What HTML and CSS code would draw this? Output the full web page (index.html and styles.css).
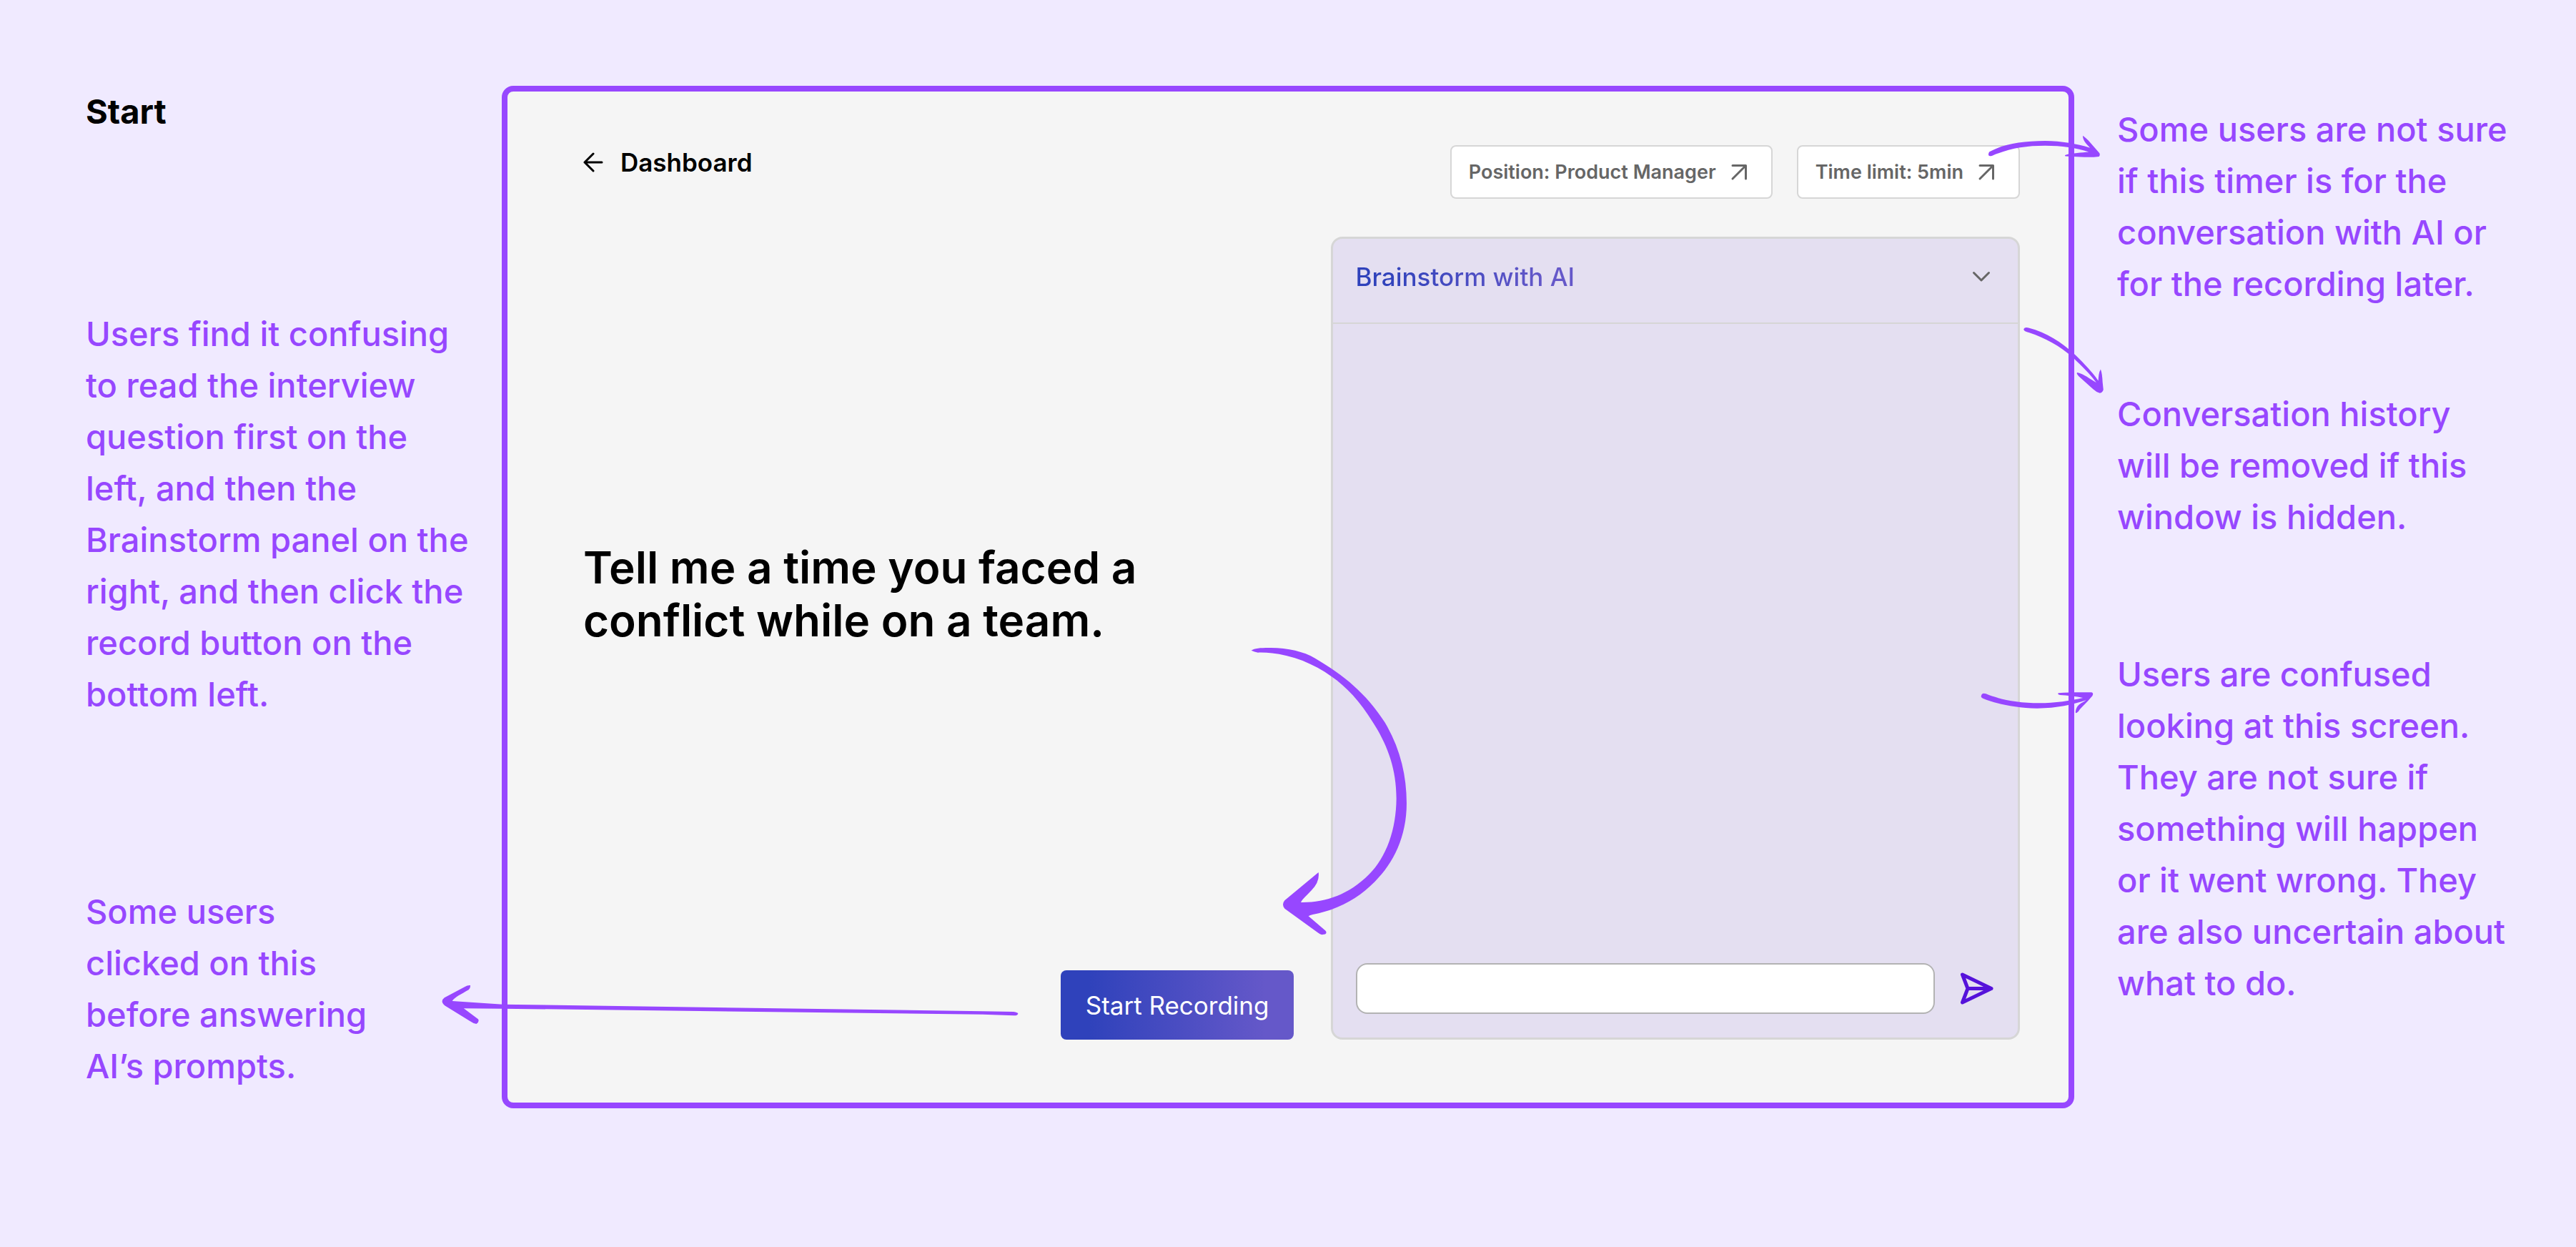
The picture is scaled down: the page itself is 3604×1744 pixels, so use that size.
FILE: index.html
```html
<!DOCTYPE html>
<html lang="en">
<head>
<meta charset="utf-8">
<meta name="viewport" content="width=device-width, initial-scale=1">
<title>Start – usability notes</title>
<link rel="stylesheet" href="styles.css">
</head>
<body>
<main class="board">
  <section class="notes notes-left">
    <h1 class="board-title">Start</h1>
    <p class="note note-order">Users find it confusing to read the interview question first on the left, and then the Brainstorm panel on the right, and then click the record button on the bottom left.</p>
    <p class="note note-record">Some users clicked on this before answering AI’s prompts.</p>
  </section>

  <section class="screen">
    <header class="screen-header">
      <a class="back" href="#">
        <svg class="back-icon" viewBox="0 0 28 28" aria-hidden="true"><path d="M14 2 2 14l12 12M2 14h24"/></svg>
        Dashboard
      </a>
      <div class="chips">
        <button class="chip" type="button">Position: Product Manager
          <svg class="chip-icon" viewBox="0 0 24 24" aria-hidden="true"><path d="M3 2.500h18.500V21M21 3 3 21"/></svg>
        </button>
        <button class="chip" type="button">Time limit: 5min
          <svg class="chip-icon" viewBox="0 0 24 24" aria-hidden="true"><path d="M3 2.500h18.500V21M21 3 3 21"/></svg>
        </button>
      </div>
    </header>

    <div class="screen-body">
      <div class="prompt">
        <h2 class="question">Tell me a time you faced a conflict while on a team.</h2>
        <button class="record" type="button">Start Recording</button>
      </div>

      <section class="panel">
        <header class="panel-header">
          <h3 class="panel-title">Brainstorm with AI</h3>
          <button class="icon-button" type="button" aria-label="Collapse">
            <svg class="chevron" viewBox="0 0 28 18" aria-hidden="true"><path d="m3.500 3.500 10.500 10.500L24.500 3.500"/></svg>
          </button>
        </header>
        <div class="messages" role="log"></div>
        <form class="composer">
          <input class="composer-input" type="text" aria-label="Message">
          <button class="icon-button" type="button" aria-label="Send">
            <svg class="send" viewBox="0 0 46 46" aria-hidden="true"><path d="M2.500 3 43 22.500 2.500 42 10 22.500zM10 22.500h33"/></svg>
          </button>
        </form>
      </section>
    </div>

    <svg class="arrows" viewBox="710 128 2184 1414" aria-hidden="true">
      <!-- from the question to the record button -->
      <path transform="translate(1720 860) scale(.3333)" d="M92 149C105 140 130 138 165 138C240 138 310 152 360 182C480 252 575 330 652 450C715 555 744 670 744 790C744 930 690 1040 610 1120C540 1190 460 1236 350 1257Q338 1260 332 1264L403 1325Q411 1334 402 1340L388 1342Q380 1340 372 1334L232 1232Q218 1215 232 1198L374 1080Q380 1120 345 1155C325 1177 308 1190 300 1206C400 1208 500 1175 585 1090C660 1015 700 900 701 770C701 640 660 540 602 450C550 365 490 300 428 258C340 195 230 155 120 158Q105 155 92 149Z"/>
      <!-- from the record button to its note -->
      <path transform="translate(600 1300) scale(.574 .3333)" d="M57 300L180 314L1350 343L1425 345Q1437 348 1436 354Q1434 362 1426 361L1350 356L180 332L85 331L120 376Q124 386 116 396Q108 394 100 384L40 320Q26 302 38 286L88 240Q94 233 101 234Q102 244 97 253C80 270 62 285 57 300Z"/>
      <!-- from the timer to its note -->
      <path transform="translate(2740 120) scale(.551 .4209)" d="M78 220C110 195 160 183 220 183C262 184 300 192 334 206C327 195 315 182 316 166Q322 172 330 182L357 222Q361 228 357 235Q340 238 320 237L272 234Q268 231 273 229C290 224 312 222 331 220C300 206 262 199 220 199C170 199 130 208 86 232Q72 238 78 220Z"/>
      <!-- from the panel header to its note -->
      <path transform="translate(2740 120) scale(.551 .4209)" d="M166 808Q168 801 178 804C225 820 262 852 293 890C325 930 345 960 355 980C356 966 356 953 361 942Q365 955 366 985L368 1010Q366 1020 359 1021Q350 1018 342 1008L306 966Q298 955 302 953C318 957 334 975 350 986C335 958 312 930 288 899C258 866 222 838 180 820Q164 816 166 808Z"/>
      <!-- from the empty conversation to its note -->
      <path transform="translate(2740 900) scale(.551 .3333)" d="M58 218Q60 205 70 211C105 235 150 250 205 250C245 250 285 240 316 228C300 222 275 218 258 216Q250 212 254 208C280 204 310 204 338 205Q344 208 340 220C325 250 310 270 305 284Q300 292 298 292Q296 285 300 270C306 252 318 246 324 238C290 256 250 272 200 272C140 270 95 252 62 230Q56 226 58 218Z"/>
    </svg>
  </section>

  <section class="notes notes-right">
    <p class="note note-timer">Some users are not sure if this timer is for the conversation with AI or for the recording later.</p>
    <p class="note note-history">Conversation history will be removed if this window is hidden.</p>
    <p class="note note-empty">Users are confused looking at this screen. They are not sure if something will happen or it went wrong. They are also uncertain about what to do.</p>
  </section>
</main>
</body>
</html>
```
FILE: styles.css
```css
:root {
  --purple: #9747ff;
  --line: #d6d6d6;
  --grey: #666;
  --brand: linear-gradient(90deg, #2f42bb 12%, #6558c9 88%);
}

* {
  box-sizing: border-box;
}

body {
  margin: 0;
  background: #f0eaff;
  color: #000;
  font-family: "Inter", sans-serif;
  font-size: 35px;
  line-height: 42px;
}

h1, h2, h3, p {
  margin: 0;
}

button {
  font: inherit;
  cursor: pointer;
}

svg {
  fill: none;
  stroke: currentColor;
  stroke-linecap: round;
  stroke-linejoin: round;
}

.board {
  display: grid;
  grid-template-columns: 582px minmax(0, 1fr) 642px;
  align-items: start;
  min-height: 100vh;
  padding: 120px 60px 120px 120px;
}

/* Notes beside the screen */

.notes {
  display: flex;
  flex-direction: column;
}

.notes-right {
  padding: 25px 0 0 60px;
}

.board-title,
.note {
  font-size: 47px;
  line-height: 72px;
}

.board-title {
  font-weight: 700;
}

.note {
  color: var(--purple);
  font-weight: 500;
}

.note-order {
  max-width: 540px;
  margin-top: 239px;
}

.note-record {
  max-width: 400px;
  margin-top: 232px;
}

.note-timer,
.note-empty {
  max-width: 560px;
}

.note-history {
  max-width: 500px;
  margin: 110px 0 148px;
}

/* App screen */

.screen {
  position: relative;
  padding: 75px 68px 88px 106px;
  border: 8px solid var(--purple);
  border-radius: 16px;
  background: #f5f5f5;
}

.screen-header {
  display: flex;
  justify-content: space-between;
  align-items: flex-start;
  margin-bottom: 53px;
}

.back {
  display: flex;
  align-items: center;
  gap: 24px;
  padding-top: 3px;
  color: inherit;
  font-weight: 600;
  text-decoration: none;
}

.back-icon {
  width: 28px;
  height: 28px;
  stroke-width: 3;
}

.chips {
  display: flex;
  gap: 34px;
}

.chip {
  display: flex;
  align-items: center;
  gap: 20px;
  height: 75px;
  padding: 0 33px 0 24px;
  border: 2px solid var(--line);
  border-radius: 8px;
  background: #fff;
  color: var(--grey);
  font-size: 27px;
  font-weight: 600;
}

.chip-icon {
  width: 24px;
  height: 24px;
  stroke-width: 3;
}

.screen-body {
  display: grid;
  grid-template-columns: 995fr 964fr;
  gap: 52px;
}

.prompt {
  display: flex;
  flex-direction: column;
  justify-content: space-between;
  padding-top: 426px;
}

.question {
  max-width: 800px;
  font-size: 62px;
  font-weight: 600;
  line-height: 74px;
}

.record {
  align-self: flex-end;
  height: 97px;
  padding: 0 35px;
  border: 0;
  border-radius: 8px;
  background: var(--brand);
  color: #fff;
}

/* Brainstorm panel */

.panel {
  display: flex;
  flex-direction: column;
  border: 3px solid var(--line);
  border-radius: 16px;
  background: #e4dff1;
}

.panel-header {
  display: flex;
  justify-content: space-between;
  align-items: center;
  padding: 32px 37px 43px 31px;
  border-bottom: 2px solid var(--line);
}

.panel-title {
  background: var(--brand);
  background-clip: text;
  color: transparent;
  font-size: 35px;
  font-weight: 500;
}

.icon-button {
  display: flex;
  padding: 0;
  border: 0;
  background: none;
  color: var(--grey);
}

.chevron {
  width: 28px;
  height: 18px;
  stroke-width: 3;
}

.messages {
  flex: 1;
  min-height: 894px;
}

.composer {
  display: flex;
  align-items: center;
  gap: 36px;
  padding: 0 34px 33px 32px;
}

.composer-input {
  flex: 1;
  min-width: 0;
  height: 71px;
  padding: 0 24px;
  border: 2px solid #b3b3b3;
  border-radius: 16px;
  background: #fff;
  font: inherit;
}

.send {
  width: 46px;
  height: 46px;
  color: #5512da;
  stroke-width: 5;
}

/* Hand-drawn arrows that lie over the screen and point at the notes */

.arrows {
  position: absolute;
  inset: 0;
  width: 100%;
  height: 100%;
  overflow: visible;
  fill: var(--purple);
  stroke: none;
  pointer-events: none;
}
```
